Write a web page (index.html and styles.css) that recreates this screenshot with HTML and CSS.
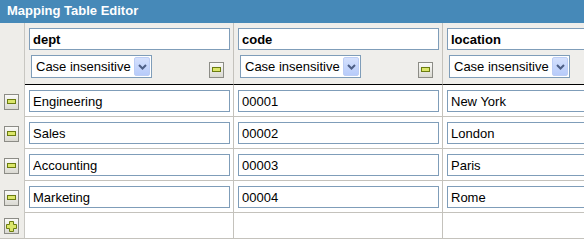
FILE: index.html
```html
<!DOCTYPE html>
<html lang="en">
<head>
  <meta charset="UTF-8">
  <title>Mapping Table Editor</title>
  <link rel="stylesheet" href="styles.css">
</head>
<body>
  <div class="titlebar">Mapping Table Editor</div>

  <table class="grid">
    <tr class="head">
      <td class="gutter"></td>
      <td>
        <input class="field name" type="text" value="dept">
        <div class="opts">
          <div class="select"><span>Case insensitive</span><span class="arrow"><svg width="9" height="6" viewBox="0 0 9 6"><path d="M1 1 L4.5 4.5 L8 1" fill="none" stroke="#4d5f86" stroke-width="2"/></svg></span></div>
          <button class="icon-btn"><svg width="15" height="16" viewBox="0 0 15 16"><defs><linearGradient id="bg" x1="0" y1="0" x2="0" y2="1"><stop offset="0" stop-color="#fbfbf9"/><stop offset="1" stop-color="#d9d8d1"/></linearGradient></defs><rect x="0.5" y="0.5" width="14" height="15" fill="url(#bg)" stroke="#8c8c86"/><rect x="3.5" y="5.5" width="8" height="4" fill="#dbe66a" stroke="#6b7c10"/></svg></button>
        </div>
      </td>
      <td>
        <input class="field name" type="text" value="code">
        <div class="opts">
          <div class="select"><span>Case insensitive</span><span class="arrow"><svg width="9" height="6" viewBox="0 0 9 6"><path d="M1 1 L4.5 4.5 L8 1" fill="none" stroke="#4d5f86" stroke-width="2"/></svg></span></div>
          <button class="icon-btn"><svg width="15" height="16" viewBox="0 0 15 16"><rect x="0.5" y="0.5" width="14" height="15" fill="url(#bg)" stroke="#8c8c86"/><rect x="3.5" y="5.5" width="8" height="4" fill="#dbe66a" stroke="#6b7c10"/></svg></button>
        </div>
      </td>
      <td>
        <input class="field name" type="text" value="location">
        <div class="opts">
          <div class="select"><span>Case insensitive</span><span class="arrow"><svg width="9" height="6" viewBox="0 0 9 6"><path d="M1 1 L4.5 4.5 L8 1" fill="none" stroke="#4d5f86" stroke-width="2"/></svg></span></div>
          <button class="icon-btn"><svg width="15" height="16" viewBox="0 0 15 16"><rect x="0.5" y="0.5" width="14" height="15" fill="url(#bg)" stroke="#8c8c86"/><rect x="3.5" y="5.5" width="8" height="4" fill="#dbe66a" stroke="#6b7c10"/></svg></button>
        </div>
      </td>
    </tr>
    <tr>
      <td class="gutter"><button class="icon-btn"><svg width="15" height="16" viewBox="0 0 15 16"><rect x="0.5" y="0.5" width="14" height="15" fill="url(#bg)" stroke="#8c8c86"/><rect x="3.5" y="5.5" width="8" height="4" fill="#dbe66a" stroke="#6b7c10"/></svg></button></td>
      <td><input class="field" type="text" value="Engineering"></td>
      <td><input class="field" type="text" value="00001"></td>
      <td><input class="field" type="text" value="New York"></td>
    </tr>
    <tr>
      <td class="gutter"><button class="icon-btn"><svg width="15" height="16" viewBox="0 0 15 16"><rect x="0.5" y="0.5" width="14" height="15" fill="url(#bg)" stroke="#8c8c86"/><rect x="3.5" y="5.5" width="8" height="4" fill="#dbe66a" stroke="#6b7c10"/></svg></button></td>
      <td><input class="field" type="text" value="Sales"></td>
      <td><input class="field" type="text" value="00002"></td>
      <td><input class="field" type="text" value="London"></td>
    </tr>
    <tr>
      <td class="gutter"><button class="icon-btn"><svg width="15" height="16" viewBox="0 0 15 16"><rect x="0.5" y="0.5" width="14" height="15" fill="url(#bg)" stroke="#8c8c86"/><rect x="3.5" y="5.5" width="8" height="4" fill="#dbe66a" stroke="#6b7c10"/></svg></button></td>
      <td><input class="field" type="text" value="Accounting"></td>
      <td><input class="field" type="text" value="00003"></td>
      <td><input class="field" type="text" value="Paris"></td>
    </tr>
    <tr>
      <td class="gutter"><button class="icon-btn"><svg width="15" height="16" viewBox="0 0 15 16"><rect x="0.5" y="0.5" width="14" height="15" fill="url(#bg)" stroke="#8c8c86"/><rect x="3.5" y="5.5" width="8" height="4" fill="#dbe66a" stroke="#6b7c10"/></svg></button></td>
      <td><input class="field" type="text" value="Marketing"></td>
      <td><input class="field" type="text" value="00004"></td>
      <td><input class="field" type="text" value="Rome"></td>
    </tr>
    <tr class="add">
      <td class="gutter"><button class="icon-btn"><svg width="15" height="16" viewBox="0 0 15 16"><rect x="0.5" y="0.5" width="14" height="15" fill="url(#bg)" stroke="#8c8c86"/><path d="M5.5 3.5 H9.5 V6.5 H12.5 V10.5 H9.5 V13.5 H5.5 V10.5 H2.5 V6.5 H5.5 Z" fill="#dbe66a" stroke="#6b7c10"/></svg></button></td>
      <td></td>
      <td></td>
      <td></td>
    </tr>
  </table>
</body>
</html>
```

FILE: styles.css
```css
body {
  margin: 0;
  width: 584px;
  overflow: hidden;
  font-family: 'Liberation Sans', Arial, sans-serif;
  font-size: 13px;
  background: #fff;
}
.titlebar {
  height: 23px;
  line-height: 22px;
  padding-left: 7px;
  background: #4689b8;
  color: #fff;
  font-weight: bold;
  font-size: 13px;
}
.grid {
  border-collapse: separate;
  border-spacing: 0;
  table-layout: fixed;
  width: 652px;
}
.grid td {
  box-sizing: border-box;
  width: 209px;
  height: 32px;
  padding: 5px 3px 4px 4px;
  vertical-align: top;
  border-right: 1px solid #c4c2bc;
  border-bottom: 1px solid #c4c2bc;
}
.grid td.gutter {
  width: 25px;
  padding: 9px 0 0 4px;
  background: #eeede9;
  border-bottom: none;
  border-right-color: #c8c7c2;
}
.head td {
  height: 62px;
  background: #efeeeb;
  border-bottom: 1px solid #000;
}
.add td {
  height: 26px;
}
.add td.gutter {
  padding-top: 5px;
  border-bottom: 1px solid #c4c2bc;
}
.field {
  display: block;
  box-sizing: border-box;
  width: 100%;
  height: 22px;
  margin: 0;
  padding: 0 3px;
  border: 1px solid #7f9db9;
  font-family: 'Liberation Sans', Arial, sans-serif;
  font-size: 13px;
  color: #000;
  background: #fff;
  outline: none;
}
.field.name {
  font-weight: bold;
}
.opts {
  display: flex;
  align-items: flex-end;
  margin-top: 5px;
}
.select {
  box-sizing: border-box;
  display: flex;
  align-items: center;
  width: 121px;
  height: 23px;
  margin-left: 2px;
  padding-left: 4px;
  border: 1px solid #7f9db9;
  background: #fff;
  white-space: nowrap;
}
.arrow {
  box-sizing: border-box;
  display: flex;
  align-items: center;
  justify-content: center;
  width: 16px;
  height: 19px;
  margin-left: auto;
  margin-right: 1px;
  border: 1px solid #bccdf5;
  border-radius: 2px;
  background: linear-gradient(#d5e1fd, #b7cbfa);
}
.icon-btn {
  display: block;
  padding: 0;
  margin: 0;
  border: none;
  background: none;
  line-height: 0;
  cursor: pointer;
}
.opts .icon-btn {
  margin-left: auto;
  margin-right: 6px;
}
```
